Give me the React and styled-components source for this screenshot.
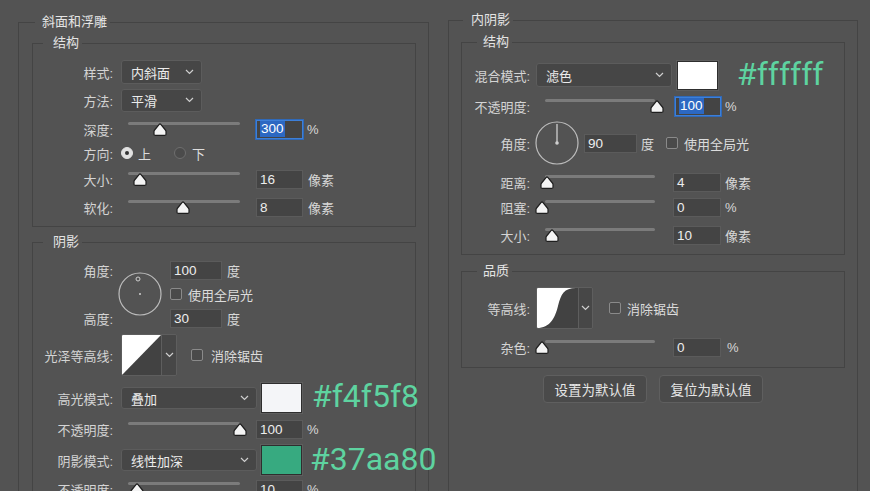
import React from "react";
import styled, { createGlobalStyle } from "styled-components";

const Global = createGlobalStyle`
  html, body { margin: 0; padding: 0; background: #535353; overflow: hidden; }
  body {
    font-family: "Liberation Sans", "Noto Sans CJK SC", sans-serif;
    font-size: 13px;
    color: #d6d6d6;
  }
  * { box-sizing: border-box; }
`;

const Page = styled.div`
  width: 870px;
  height: 491px;
  overflow: hidden;
  display: flex;
  align-items: flex-start;
  padding-left: 18px;
`;

const Column = styled.div`
  flex: none;
  width: ${(p) => p.$w}px;
  margin-top: ${(p) => p.$top}px;
  margin-left: ${(p) => p.$ml || 0}px;
`;

const Group = styled.fieldset`
  margin: ${(p) => p.$mt || 0}px 0 0 0;
  padding: 0;
  min-width: 0;
  width: ${(p) => p.$w}px;
  min-height: ${(p) => (p.$minh ? `${p.$minh}px` : "auto")};
  border: 1px solid #444444;
`;

const Legend = styled.legend`
  margin-left: ${(p) => p.$ml}px;
  padding: 0 3px 0 ${(p) => p.$pl}px;
  line-height: 16px;
  font-size: 13px;
  color: #e4e4e4;
`;

const GroupBody = styled.div`
  padding: ${(p) => p.$pad};
`;

const Row = styled.div`
  display: flex;
  align-items: center;
  height: ${(p) => p.$h || 24}px;
  margin-top: ${(p) => p.$mt || 0}px;
`;

const Label = styled.span`
  flex: none;
  width: ${(p) => p.$w}px;
  margin-right: ${(p) => p.$mr}px;
  text-align: right;
  white-space: nowrap;
  color: #d4d4d4;
`;

const Select = styled.div`
  flex: none;
  display: flex;
  align-items: center;
  justify-content: space-between;
  width: ${(p) => p.$w}px;
  height: ${(p) => p.$h || 23}px;
  padding: 0 7px 0 9px;
  background: #464646;
  border: 1px solid #5c5c5c;
  border-radius: 3px;
  color: #ececec;
`;

const Chevron = () => (
  <svg width="9" height="6" viewBox="0 0 9 6">
    <polyline points="1,1 4.5,4.5 8,1" fill="none" stroke="#cfcfcf" strokeWidth="1.2" />
  </svg>
);

const Input = styled.div`
  flex: none;
  display: flex;
  align-items: center;
  width: ${(p) => p.$w}px;
  height: ${(p) => p.$h || 19}px;
  margin-left: ${(p) => p.$ml || 0}px;
  padding-left: 3px;
  background: #444444;
  border: 1px solid ${(p) => (p.$active ? "#3d7fd8" : "#5b5b5b")};
  box-shadow: ${(p) => (p.$active ? "0 0 0 1px #2f69b8" : "none")};
  color: #ededed;
  font-size: 13.5px;
`;

const Selected = styled.span`
  background: #2c68c2;
  color: #ffffff;
  padding: 0 1px;
  line-height: 16px;
`;

const Unit = styled.span`
  flex: none;
  margin-left: ${(p) => p.$ml || 4}px;
  color: #d8d8d8;
`;

const SliderBox = styled.div`
  position: relative;
  flex: none;
  width: ${(p) => p.$w}px;
  height: 24px;
  margin-left: ${(p) => p.$ml}px;
  margin-right: ${(p) => p.$mr}px;
`;

const Track = styled.div`
  position: absolute;
  left: 0;
  right: 0;
  top: 5px;
  height: 3px;
  border-radius: 2px;
  background: #7b7b7b;
`;

const ThumbWrap = styled.div`
  position: absolute;
  top: 6px;
  left: ${(p) => p.$x - 7}px;
  width: 14px;
  height: 14px;
`;

const Thumb = () => (
  <svg width="14" height="14" viewBox="0 0 14 14">
    <path
      d="M6.2 1.4 Q7 0.6 7.8 1.4 L12.4 7 Q13 7.7 13 8.6 V11.2 Q13 12.4 11.8 12.4 H2.2 Q1 12.4 1 11.2 V8.6 Q1 7.7 1.6 7 Z"
      fill="#f4f4f4"
      stroke="#1e1e1e"
      strokeWidth="1.2"
    />
  </svg>
);

const Slider = ({ w, ml, mr, x }) => (
  <SliderBox $w={w} $ml={ml} $mr={mr}>
    <Track />
    <ThumbWrap $x={x}>
      <Thumb />
    </ThumbWrap>
  </SliderBox>
);

const RadioDot = styled.span`
  flex: none;
  width: 12px;
  height: 12px;
  border-radius: 50%;
  margin-left: ${(p) => p.$ml || 0}px;
  display: flex;
  align-items: center;
  justify-content: center;
  background: ${(p) => (p.$on ? "#e2e2e2" : "#4b4b4b")};
  border: 1px solid ${(p) => (p.$on ? "#e2e2e2" : "#6e6e6e")};
  &::after {
    content: "";
    width: 4px;
    height: 4px;
    border-radius: 50%;
    background: ${(p) => (p.$on ? "#333" : "transparent")};
  }
`;

const OptText = styled.span`
  flex: none;
  margin-left: ${(p) => p.$ml || 6}px;
  color: #dcdcdc;
`;

const Check = styled.span`
  flex: none;
  width: 12px;
  height: 12px;
  margin-left: ${(p) => p.$ml || 0}px;
  border: 1px solid #8a8a8a;
  border-radius: 2px;
  background: #4a4a4a;
`;

const Swatch = styled.div`
  flex: none;
  width: 41px;
  height: ${(p) => p.$h || 30}px;
  margin-left: ${(p) => p.$ml}px;
  background: ${(p) => p.$c};
  border: 1px solid #2e2e2e;
  box-shadow: 0 0 0 1px #5e5e5e;
`;

const Hex = styled.span`
  flex: none;
  margin-left: ${(p) => p.$ml}px;
  margin-top: ${(p) => p.$mt || 0}px;
  font-family: Roboto, "Liberation Sans", sans-serif;
  font-size: 32px;
  line-height: 1;
  color: #5ed3a0;
`;

const ContourWrap = styled.div`
  flex: none;
  display: flex;
  height: 42px;
  border: 1px solid #5e5e5e;
  border-radius: 2px;
  overflow: hidden;
`;

const ContourPic = styled.div`
  width: ${(p) => p.$w}px;
  height: 100%;
  background: #424242;
  line-height: 0;
`;

const ContourDrop = styled.div`
  width: ${(p) => p.$w}px;
  height: 100%;
  display: flex;
  align-items: center;
  justify-content: center;
  background: #474747;
  border-left: 1px solid #5e5e5e;
`;

const Dial = styled.div`
  flex: none;
  width: 44px;
  height: 44px;
  margin-left: ${(p) => p.$ml}px;
  line-height: 0;
`;

const AngleGrid = styled.div`
  display: grid;
  grid-template-columns: 88px 49px auto;
  grid-template-rows: repeat(3, 24px);
  align-items: center;
  margin-top: ${(p) => p.$mt}px;
`;

const GridLabel = styled.span`
  grid-column: 1;
  grid-row: ${(p) => p.$row};
  padding-right: 8px;
  text-align: right;
  color: #d4d4d4;
`;

const GridDial = styled.div`
  grid-column: 2;
  grid-row: 1 / 4;
  margin-left: -3px;
  line-height: 0;
`;

const GridCell = styled.div`
  grid-column: 3;
  grid-row: ${(p) => p.$row};
  display: flex;
  align-items: center;
`;

const ButtonRow = styled.div`
  display: flex;
  justify-content: center;
  gap: 12px;
  margin-top: 7px;
`;

const Button = styled.div`
  width: 104px;
  height: 28px;
  display: flex;
  align-items: center;
  justify-content: center;
  background: #4a4a4a;
  border: 1px solid #5f5f5f;
  border-radius: 4px;
  color: #e6e6e6;
  font-size: 13.5px;
`;

const DialSvg = ({ mode }) => (
  <svg width="44" height="44" viewBox="0 0 44 44">
    <circle cx="22" cy="22" r="21" fill="none" stroke="#bdbdbd" strokeWidth="1.2" />
    {mode === "left" ? (
      <>
        <circle cx="20" cy="7" r="2" fill="none" stroke="#cfcfcf" strokeWidth="1" />
        <circle cx="22" cy="22" r="1" fill="#cfcfcf" />
      </>
    ) : (
      <>
        <line x1="22" y1="22" x2="22" y2="3" stroke="#cfcfcf" strokeWidth="1.3" />
        <circle cx="22" cy="22" r="1.8" fill="#cfcfcf" />
      </>
    )}
  </svg>
);

const Contour = ({ kind, picW, dropW }) => (
  <ContourWrap>
    <ContourPic $w={picW}>
      <svg width={picW} height="40" viewBox={`0 0 ${picW} 40`}>
        {kind === "linear" ? (
          <polygon points={`0,0 ${picW},0 0,40`} fill="#ffffff" />
        ) : (
          <path
            d={`M0 0 H${picW - 2} C${picW - 14} 0 ${picW - 17} 6 ${picW - 20} 18 C${picW - 23} 30 ${picW - 28} 40 0 40 Z`}
            fill="#ffffff"
          />
        )}
      </svg>
    </ContourPic>
    <ContourDrop $w={dropW}>
      <Chevron />
    </ContourDrop>
  </ContourWrap>
);

const L = { w: 80, mr: 8 };
const R = { w: 68, mr: 6 };

function LeftPanel() {
  return (
    <Column $w={411} $top={14}>
      <Group $w={411} $minh={520}>
        <Legend $ml={16} $pl={7}>斜面和浮雕</Legend>
        <GroupBody $pad="5px 0 0 13px">
          <Group $w={384}>
            <Legend $ml={10} $pl={10}>结构</Legend>
            <GroupBody $pad="0 0 7px 0">
              <Row $mt={9}>
                <Label $w={L.w} $mr={L.mr}>样式:</Label>
                <Select $w={81} $h={24}>内斜面<Chevron /></Select>
              </Row>
              <Row $mt={4}>
                <Label $w={L.w} $mr={L.mr}>方法:</Label>
                <Select $w={81}>平滑<Chevron /></Select>
              </Row>
              <Row $mt={5}>
                <Label $w={L.w} $mr={L.mr}>深度:</Label>
                <Slider w={112} ml={7} mr={16} x={32} />
                <Input $w={47} $active><Selected>300</Selected></Input>
                <Unit>%</Unit>
              </Row>
              <Row>
                <Label $w={L.w} $mr={L.mr}>方向:</Label>
                <RadioDot $on />
                <OptText $ml={5}>上</OptText>
                <RadioDot $ml={23} />
                <OptText $ml={6}>下</OptText>
              </Row>
              <Row $mt={2}>
                <Label $w={L.w} $mr={L.mr}>大小:</Label>
                <Slider w={112} ml={7} mr={16} x={12} />
                <Input $w={47}>16</Input>
                <Unit $ml={5}>像素</Unit>
              </Row>
              <Row $mt={4}>
                <Label $w={L.w} $mr={L.mr}>软化:</Label>
                <Slider w={112} ml={7} mr={16} x={55} />
                <Input $w={47}>8</Input>
                <Unit $ml={5}>像素</Unit>
              </Row>
            </GroupBody>
          </Group>

          <Group $w={384} $mt={7} $minh={300}>
            <Legend $ml={10} $pl={10}>阴影</Legend>
            <GroupBody $pad="0">
              <AngleGrid $mt={8}>
                <GridLabel $row={1}>角度:</GridLabel>
                <GridLabel $row={3}>高度:</GridLabel>
                <GridDial>
                  <DialSvg mode="left" />
                </GridDial>
                <GridCell $row={1}>
                  <Input $w={52}>100</Input>
                  <Unit $ml={5}>度</Unit>
                </GridCell>
                <GridCell $row={2}>
                  <Check />
                  <OptText $ml={6}>使用全局光</OptText>
                </GridCell>
                <GridCell $row={3}>
                  <Input $w={52}>30</Input>
                  <Unit $ml={5}>度</Unit>
                </GridCell>
              </AngleGrid>
              <Row $h={42} $mt={4}>
                <Label $w={L.w} $mr={L.mr}>光泽等高线:</Label>
                <Contour kind="linear" picW={39} dropW={15} />
                <Check $ml={14} />
                <OptText $ml={8}>消除锯齿</OptText>
              </Row>
              <Row $h={30} $mt={7}>
                <Label $w={L.w} $mr={L.mr}>高光模式:</Label>
                <Select $w={136} $h={22}>叠加<Chevron /></Select>
                <Swatch $ml={4} $c="#f4f5f8" />
                <Hex $ml={10} $mt={-4}>#f4f5f8</Hex>
              </Row>
              <Row $mt={4}>
                <Label $w={L.w} $mr={L.mr}>不透明度:</Label>
                <Slider w={112} ml={7} mr={16} x={112} />
                <Input $w={47}>100</Input>
                <Unit>%</Unit>
              </Row>
              <Row $h={30} $mt={4}>
                <Label $w={L.w} $mr={L.mr}>阴影模式:</Label>
                <Select $w={136} $h={22}>线性加深<Chevron /></Select>
                <Swatch $ml={4} $c="#37aa80" />
                <Hex $ml={8} $mt={-2}>#37aa80</Hex>
              </Row>
              <Row $mt={2}>
                <Label $w={L.w} $mr={L.mr}>不透明度:</Label>
                <Slider w={112} ml={7} mr={16} x={9} />
                <Input $w={47}>10</Input>
                <Unit>%</Unit>
              </Row>
            </GroupBody>
          </Group>
        </GroupBody>
      </Group>
    </Column>
  );
}

function RightPanel() {
  return (
    <Column $w={410} $top={12} $ml={19}>
      <Group $w={410} $minh={520}>
        <Legend $ml={14} $pl={8}>内阴影</Legend>
        <GroupBody $pad="6px 12px 0 12px">
          <Group $w={384}>
            <Legend $ml={15} $pl={6}>结构</Legend>
            <GroupBody $pad="0 0 7px 0">
              <Row $h={30} $mt={10}>
                <Label $w={R.w} $mr={R.mr}>混合模式:</Label>
                <Select $w={136} $h={24}>滤色<Chevron /></Select>
                <Swatch $ml={5} $h={29} $c="#ffffff" />
                <Hex $ml={19} $mt={-2}>#ffffff</Hex>
              </Row>
              <Row $mt={4}>
                <Label $w={R.w} $mr={R.mr}>不透明度:</Label>
                <Slider w={110} ml={9} mr={20} x={112} />
                <Input $w={46} $active><Selected>100</Selected></Input>
                <Unit>%</Unit>
              </Row>
              <Row $h={42} $mt={4}>
                <Label $w={R.w} $mr={R.mr}>角度:</Label>
                <Dial $ml={-1}>
                  <DialSvg mode="right" />
                </Dial>
                <Input $w={53} $ml={5}>90</Input>
                <Unit $ml={4}>度</Unit>
                <Check $ml={12} />
                <OptText $ml={6}>使用全局光</OptText>
              </Row>
              <Row $mt={6}>
                <Label $w={R.w} $mr={R.mr}>距离:</Label>
                <Slider w={110} ml={9} mr={18} x={2} />
                <Input $w={48}>4</Input>
                <Unit>像素</Unit>
              </Row>
              <Row $mt={1}>
                <Label $w={R.w} $mr={R.mr}>阻塞:</Label>
                <Slider w={110} ml={9} mr={18} x={-3} />
                <Input $w={48}>0</Input>
                <Unit>%</Unit>
              </Row>
              <Row $mt={4}>
                <Label $w={R.w} $mr={R.mr}>大小:</Label>
                <Slider w={110} ml={9} mr={18} x={7} />
                <Input $w={48}>10</Input>
                <Unit>像素</Unit>
              </Row>
            </GroupBody>
          </Group>

          <Group $w={384} $mt={8}>
            <Legend $ml={15} $pl={6}>品质</Legend>
            <GroupBody $pad="0 0 8px 0">
              <Row $h={42} $mt={8}>
                <Label $w={R.w} $mr={R.mr}>等高线:</Label>
                <Contour kind="curve" picW={41} dropW={14} />
                <Check $ml={16} />
                <OptText $ml={6}>消除锯齿</OptText>
              </Row>
              <Row $mt={6}>
                <Label $w={R.w} $mr={R.mr}>杂色:</Label>
                <Slider w={110} ml={9} mr={18} x={-3} />
                <Input $w={48}>0</Input>
                <Unit $ml={6}>%</Unit>
              </Row>
            </GroupBody>
          </Group>

          <ButtonRow>
            <Button>设置为默认值</Button>
            <Button>复位为默认值</Button>
          </ButtonRow>
        </GroupBody>
      </Group>
    </Column>
  );
}

export default function App() {
  return (
    <>
      <Global />
      <Page>
        <LeftPanel />
        <RightPanel />
      </Page>
    </>
  );
}
